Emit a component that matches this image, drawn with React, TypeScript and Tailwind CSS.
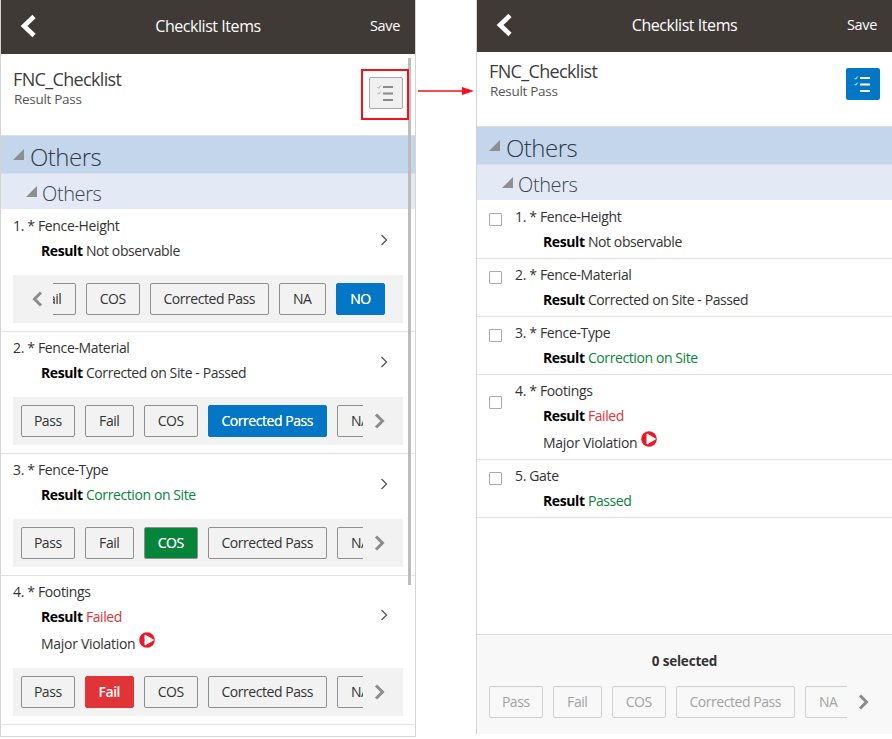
import React from "react";

type BtnKind = "default" | "blue" | "green" | "red" | "disabled";

const kindClass: Record<BtnKind, string> = {
  default: "bg-[#f2f2f2] border-[#8f8f8f] text-[#333333]",
  blue: "bg-[#0476c6] border-[#0476c6] text-white [text-shadow:0_0_0.4px_#ffffff]",
  green: "bg-[#05843a] border-[#8f8f8f] text-white [text-shadow:0_0_0.4px_#ffffff]",
  red: "bg-[#e03437] border-[#e03437] text-white font-semibold",
  disabled: "bg-[#f8f8f8] border-[#cfcfcf] text-[#a3a3a3]",
};

const widthClass: Record<string, string> = {
  Pass: "w-[53.5px]",
  Fail: "w-[48.5px]",
  COS: "w-[53.5px]",
  "Corrected Pass": "w-[118.5px]",
  NA: "w-[46.5px]",
  NO: "w-[49px]",
};

function Btn({ label, kind = "default" }: { label: string; kind?: BtnKind }) {
  return (
    <div
      className={`h-8 shrink-0 rounded-[2px] border flex items-center justify-center text-[14px] leading-none tracking-[-0.45px] ${widthClass[label]} ${kindClass[kind]}`}
    >
      {label}
    </div>
  );
}

function BigChevron({ left = false, color = "#8c8c8c" }: { left?: boolean; color?: string }) {
  return (
    <svg width="11" height="16" viewBox="0 0 11 16" className="shrink-0">
      <path
        d={left ? "M9 1.5 L2.5 8 L9 14.5" : "M2 1.5 L8.5 8 L2 14.5"}
        fill="none"
        stroke={color}
        strokeWidth="3"
      />
    </svg>
  );
}

function Toolbar({ selected, scrolled = false }: { selected?: { label: string; kind: BtnKind }; scrolled?: boolean }) {
  const labels = ["Pass", "Fail", "COS", "Corrected Pass", "NA", "NO"];
  const kindOf = (l: string): BtnKind => (selected && selected.label === l ? selected.kind : "default");
  return (
    <div className="h-12 bg-[#f2f2f2] flex items-center pl-2 pr-[18px]">
      {scrolled ? (
        <>
          <div className="w-[32px] shrink-0 flex justify-end pr-[10px]">
            <BigChevron left />
          </div>
          <div className="w-[333px] overflow-hidden flex justify-end gap-[10.5px]">
            {labels.map((l) => (
              <Btn key={l} label={l} kind={kindOf(l)} />
            ))}
          </div>
        </>
      ) : (
        <>
          <div className="w-[342px] overflow-hidden flex gap-[10.5px]">
            {labels.map((l) => (
              <Btn key={l} label={l} kind={kindOf(l)} />
            ))}
          </div>
          <div className="ml-[11px]">
            <BigChevron />
          </div>
        </>
      )}
    </div>
  );
}

function Header() {
  return (
    <div className="h-full bg-[#3f3a36] flex items-center px-[15px] pb-[2px] text-white">
      <div className="w-[60px] flex pl-[3px]">
        <svg width="18" height="24" viewBox="0 0 18 24">
          <path d="M15 2.5 L5 12 L15 21.5" fill="none" stroke="#ffffff" strokeWidth="4.6" />
        </svg>
      </div>
      <div className="flex-1 text-center text-[16px] tracking-[-0.45px]">Checklist Items</div>
      <div className="w-[60px] text-right text-[14.5px] tracking-[-0.35px]">Save</div>
    </div>
  );
}

function ListIcon({ color, check }: { color: string; check: string }) {
  return (
    <svg width="18" height="16" viewBox="0 0 18 16">
      <path d="M0.5 2 L1.7 3.2 L3.6 0.6" fill="none" stroke={check} strokeWidth="0.9" />
      <path d="M0.5 8 L1.7 9.2 L3.6 6.6" fill="none" stroke={check} strokeWidth="0.9" />
      <rect x="6" y="1" width="10" height="2" fill={color} />
      <rect x="6" y="7.5" width="10" height="2" fill={color} />
      <rect x="6" y="14" width="10" height="2" fill={color} />
    </svg>
  );
}

function Triangle({ size }: { size: number }) {
  return (
    <svg width={size} height={size} viewBox="0 0 10 10" className="shrink-0">
      <path d="M0 10 L10 0 L10 10 Z" fill="#8f8f8f" />
    </svg>
  );
}

function Summary({ active }: { active: boolean }) {
  return (
    <div className="h-full flex justify-between pl-[12px] border-b border-[#dfdfdb]">
      <div className={active ? "pt-[7px]" : "pt-[13px]"}>
        <div className="text-[18px] leading-6 text-[#3d3d3d] tracking-[-0.65px]">FNC_Checklist</div>
        <div className="text-[13.5px] leading-[17px] text-[#555555] tracking-[-0.3px] pl-[1px]">Result Pass</div>
      </div>
      {active ? (
        <div className="mt-4 mr-3 w-[34px] h-8 rounded-[2px] bg-[#0476c6] flex items-center justify-center">
          <ListIcon color="#ffffff" check="#ffffff" />
        </div>
      ) : (
        <div className="mt-[23px] mr-3 w-[34px] h-8 rounded-[2px] bg-[#f0f0f0] border border-[#a8a8a8] flex items-center justify-center">
          <ListIcon color="#8a8a8a" check="#a0a0a0" />
        </div>
      )}
    </div>
  );
}

function Sections() {
  return (
    <>
      <div className="h-[38px] bg-[#c4d6ec] flex items-center pl-[12px] gap-[6px] border-b border-[#d8e0ea]">
        <Triangle size={11} />
        <span className="text-[24px] leading-none font-light text-[#2f3a46] tracking-[-0.5px] pt-[5px]">Others</span>
      </div>
      <div className="h-[35px] bg-[#e3eaf6] flex items-center pl-[25px] gap-[5px]">
        <Triangle size={11} />
        <span className="text-[20px] leading-none font-light text-[#3c4652] tracking-[-0.4px] pt-[4px]">Others</span>
      </div>
    </>
  );
}

function ResultLine({ value, tone }: { value: string; tone?: "green" | "red" }) {
  const c = tone === "green" ? "text-[#05843a]" : tone === "red" ? "text-[#e03437]" : "text-[#333333]";
  return (
    <div className="text-[14px] leading-5 tracking-[-0.4px]">
      <span className="font-bold text-black">Result</span> <span className={c}>{value}</span>
    </div>
  );
}

function Major() {
  return (
    <div className="text-[14px] leading-5 tracking-[-0.3px] text-[#333333] flex items-start">
      <span className="mt-[1px]">Major Violation</span>
      <svg width="16" height="16" viewBox="0 0 16 16" className="ml-[4px] mt-[-1px]">
        <circle cx="8" cy="8" r="7.8" fill="#e8192c" />
        <path
          d="M6 3 L14.5 8 L6 13 Z"
          fill="#ffffff"
          stroke="#ffffff"
          strokeWidth="1"
          strokeLinejoin="round"
        />
      </svg>
    </div>
  );
}

function SmallChevron({ major }: { major?: boolean }) {
  return (
    <svg width="8" height="12" viewBox="0 0 8 12" className={`self-start ${major ? "mt-[27px]" : "mt-[18px]"}`}>
      <path d="M1.5 1 L6.5 6 L1.5 11" fill="none" stroke="#555555" strokeWidth="1.3" />
    </svg>
  );
}

function LeftRow({
  title,
  value,
  tone,
  major,
  selected,
  scrolled,
  first,
}: {
  title: string;
  value: string;
  tone?: "green" | "red";
  major?: boolean;
  selected?: { label: string; kind: BtnKind };
  scrolled?: boolean;
  first?: boolean;
}) {
  return (
    <div className={`border-b border-[#e3e3de] pl-[12px] pr-[12px] pb-2 ${first ? "pt-[7px]" : "pt-[6px]"}`}>
      <div className={`flex justify-between pr-[15px] ${major ? "h-[86px]" : "h-[59px]"}`}>
        <div>
          <div className="text-[14px] leading-5 text-[#333333] tracking-[-0.35px]">{title}</div>
          <div className="pl-[28px] mt-[5px]">
            <ResultLine value={value} tone={tone} />
            {major && (
              <div className="mt-[6px]">
                <Major />
              </div>
            )}
          </div>
        </div>
        <SmallChevron major={major} />
      </div>
      <Toolbar selected={selected} scrolled={scrolled} />
    </div>
  );
}

function RightRow({
  title,
  value,
  tone,
  major,
  first,
}: {
  title: string;
  value: string;
  tone?: "green" | "red";
  major?: boolean;
  first?: boolean;
}) {
  return (
    <div
      className={`border-b border-[#e3e3de] flex pl-[12px] ${first ? "pt-[7px] h-[59px]" : "pt-[6px]"} ${
        major ? "h-[85px]" : first ? "" : "h-[58px]"
      }`}
    >
      <div
        className={`w-[13px] h-[13px] rounded-[1px] border border-[#aaaaaa] bg-white shrink-0 ${
          major ? "mt-[15px]" : "mt-[6px]"
        }`}
      />
      <div className="ml-[13px]">
        <div className="text-[14px] leading-5 text-[#333333] tracking-[-0.35px]">{title}</div>
        <div className="pl-[28px] mt-[5px]">
          <ResultLine value={value} tone={tone} />
          {major && (
            <div className="mt-[6px]">
              <Major />
            </div>
          )}
        </div>
      </div>
    </div>
  );
}

export default function App() {
  const labels = ["Pass", "Fail", "COS", "Corrected Pass", "NA", "NO"];
  return (
    <div className="relative w-[892px] h-[739px] overflow-hidden bg-white flex font-['Open_Sans',sans-serif]">
      {/* Left panel */}
      <div className="w-[416px] h-[737px] shrink-0 border-x border-b border-[#d4d4d4] overflow-hidden">
        <div className="h-[54px]">
          <Header />
        </div>
        <div className="h-[82px]">
          <Summary active={false} />
        </div>
        <Sections />
        <LeftRow
          first
          title="1. * Fence-Height"
          value="Not observable"
          scrolled
          selected={{ label: "NO", kind: "blue" }}
        />
        <LeftRow
          title="2. * Fence-Material"
          value="Corrected on Site - Passed"
          selected={{ label: "Corrected Pass", kind: "blue" }}
        />
        <LeftRow
          title="3. * Fence-Type"
          value="Correction on Site"
          tone="green"
          selected={{ label: "COS", kind: "green" }}
        />
        <LeftRow
          title="4. * Footings"
          value="Failed"
          tone="red"
          major
          selected={{ label: "Fail", kind: "red" }}
        />
      </div>

      {/* Right panel */}
      <div className="ml-[60px] w-[416px] h-[734px] shrink-0 border-l border-[#d4d4d4] flex flex-col">
        <div className="h-[52px] shrink-0">
          <Header />
        </div>
        <div className="h-[75px] shrink-0">
          <Summary active />
        </div>
        <Sections />
        <div className="flex-1">
          <RightRow first title="1. * Fence-Height" value="Not observable" />
          <RightRow title="2. * Fence-Material" value="Corrected on Site - Passed" />
          <RightRow title="3. * Fence-Type" value="Correction on Site" tone="green" />
          <RightRow title="4. * Footings" value="Failed" tone="red" major />
          <RightRow title="5. Gate" value="Passed" tone="green" />
        </div>
        <div className="h-[100px] shrink-0 bg-[#f8f8f8] border-t border-[#dcdcdc] pl-[12px]">
          <div className="pt-4 pr-[12px] text-center text-[13.5px] leading-5 font-bold text-[#333333] tracking-[-0.2px]">
            0 selected
          </div>
          <div className="mt-[15px] flex items-center">
            <div className="w-[358px] overflow-hidden flex gap-[10.5px]">
              {labels.map((l) => (
                <Btn key={l} label={l} kind="disabled" />
              ))}
            </div>
            <div className="ml-[11px]">
              <BigChevron />
            </div>
          </div>
        </div>
      </div>

      {/* Overlays: scrollbar, callout box and arrow */}
      <div className="absolute left-[408px] top-[58px] w-[3px] h-[527px] bg-[#bdbdbd]" />
      <div className="absolute left-[361px] top-[69px] w-[48px] h-[51px] border-2 border-[#f4111b]" />
      <svg className="absolute left-[418px] top-[85px]" width="56" height="12" viewBox="0 0 56 12">
        <path d="M0 6 H46" stroke="#f4111b" strokeWidth="1.6" />
        <path d="M44 2 L56 6 L44 10 Z" fill="#f4111b" />
      </svg>
    </div>
  );
}
